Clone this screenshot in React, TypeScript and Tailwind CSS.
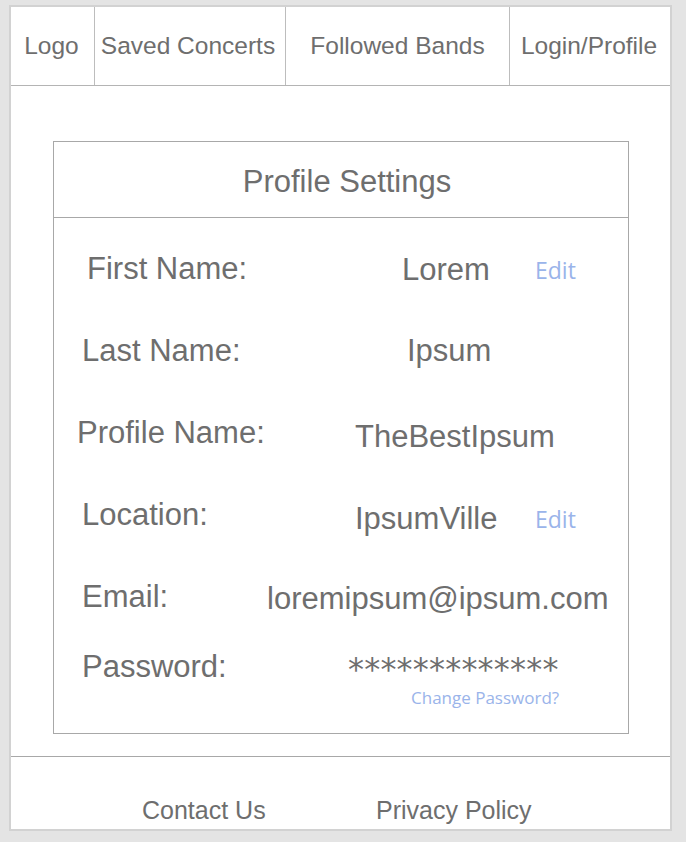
import React from "react";

const rows = [
  { label: "First Name:", value: "Lorem", labelPad: "pl-[33px]", labelW: "w-[348px]", valW: "w-[133px]", valPad: "pt-[2px]", edit: true },
  { label: "Last Name:", value: "Ipsum", labelPad: "pl-[28px]", labelW: "w-[353px]", valW: "w-[128px]", valPad: "pt-0", edit: false },
  { label: "Profile Name:", value: "TheBestIpsum", labelPad: "pl-[23px]", labelW: "w-[301px]", valW: "w-[180px]", valPad: "pt-[8px]", edit: false },
  { label: "Location:", value: "IpsumVille", labelPad: "pl-[28px]", labelW: "w-[301px]", valW: "w-[180px]", valPad: "pt-[8px]", edit: true },
  { label: "Email:", value: "loremipsum@ipsum.com", labelPad: "pl-[28px]", labelW: "w-[213px]", valW: "w-[350px]", valPad: "pt-[4px]", edit: false },
];

export default function App() {
  return (
    <div className="min-h-[842px] w-[686px] bg-[#e4e4e4] pt-[5px] pl-[9px] font-['Liberation_Sans',Arial,sans-serif] text-[#6e6e6e]">
      <div className="w-[663px] h-[826px] bg-white border-l-2 border-r-2 border-t-2 border-b-2 border-[#d2d2d2] flex flex-col">
        {/* nav */}
        <div className="flex h-[79px] border-b border-[#b4b4b4] text-[24.5px] shrink-0">
          <div className="w-[84px] flex items-center justify-center border-r border-[#bdbdbd] pr-[2px]">Logo</div>
          <div className="w-[191px] flex items-center justify-center border-r border-[#bdbdbd] pr-[4px]">Saved Concerts</div>
          <div className="w-[224px] flex items-center justify-center border-r border-[#bdbdbd]">Followed Bands</div>
          <div className="flex-1 flex items-center justify-center pr-[2px]">Login/Profile</div>
        </div>

        {/* main */}
        <div className="flex-1 pt-[55px] pl-[42px]">
          <div className="w-[576px] h-[593px] border border-[#a8a8a8]">
            <div className="h-[76px] border-b border-[#a8a8a8] flex items-center justify-center text-[31px] pt-[5px] pl-[12px]">
              Profile Settings
            </div>
            <div className="pt-[10px] text-[31px]">
              {rows.map((r) => (
                <div key={r.label} className="flex items-center h-[82px]">
                  <span className={`${r.labelW} ${r.labelPad} shrink-0 whitespace-nowrap`}>{r.label}</span>
                  <span className={`${r.valW} ${r.valPad} shrink-0 whitespace-nowrap`}>{r.value}</span>
                  {r.edit && (
                    <span className={`${r.valPad} text-[23px] text-[#9ab4ea] font-['Open_Sans',sans-serif]`}>Edit</span>
                  )}
                </div>
              ))}
              <div className="flex items-center h-[59px]">
                <span className="w-[294px] pl-[28px] shrink-0">Password:</span>
                <span className="font-['DejaVu_Sans',sans-serif] text-[32px] leading-[20px] tracking-[0.2px] pt-[2px]">*************</span>
              </div>
              <div className="pl-[357px] text-[17px] text-[#9ab4ea] font-['Open_Sans',sans-serif] leading-[20px] -mt-[9px]">
                Change Password?
              </div>
            </div>
          </div>
        </div>

        {/* footer */}
        <div className="h-[73px] border-t border-[#a8a8a8] flex items-end pb-[0px] text-[25px] shrink-0">
          <span className="ml-[131px] w-[234px]">Contact Us</span>
          <span>Privacy Policy</span>
        </div>
      </div>
    </div>
  );
}
